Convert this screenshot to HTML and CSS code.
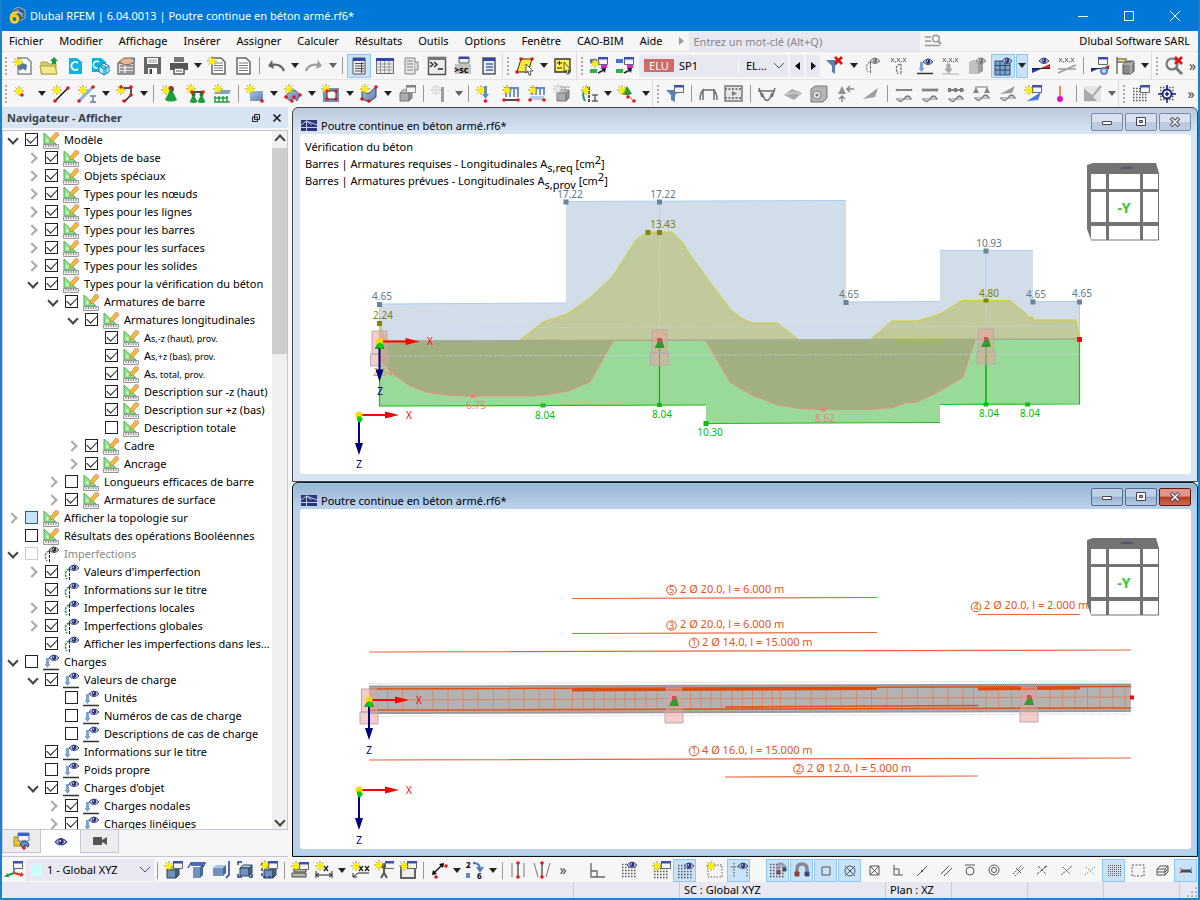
FILE: index.html
```html
<!DOCTYPE html>
<html lang="fr">
<head>
<meta charset="utf-8">
<title>Dlubal RFEM | 6.04.0013 | Poutre continue en béton armé.rf6*</title>
<link rel="stylesheet" href="styles.css">
</head>
<body>
<svg class="defs" aria-hidden="true">
  <defs>
    <linearGradient id="steel" x1="0" y1="0" x2="1" y2="1"><stop offset="0" stop-color="#a9c4e2"/><stop offset="1" stop-color="#5b80ab"/></linearGradient>
    <g id="star"><path d="M5 0v10M0 5h10M1.500 1.500l7 7M8.500 1.500l-7 7" stroke="#a89a10" stroke-width="1"/><path d="M5 1.500l1 1.500 1.700-.500-.500 1.700 1.500 1-1.500 1 .500 1.700-1.700-.500-1 1.500-1-1.500-1.700.500.500-1.700-1.500-1 1.500-1-.500-1.700 1.700.500z" fill="#ffee00"/></g>
    <g id="eye"><path d="M0 4q5-6 10 0q-5 5-10 0z" fill="#c4cbe8" stroke="#3c4472"/><circle cx="5" cy="3.600" r="2.300" fill="#26307c"/><circle cx="4.300" cy="3" r=".8" fill="#fff"/></g>
    <g id="win"><path d="M.5.5h9v7h-9z" fill="#f4f4f4" stroke="#666"/><path d="M0 0h10v2.500H0z" fill="#3c50b4"/></g>
    <circle id="dot" r="1.800" fill="#e8141c"/>
    <g id="cone"><path d="M4.500 2l4 8q-4 2-8 0z" fill="#1f9a3c"/><circle cx="4.500" cy="2.500" r="2" fill="#1b7f30"/></g>
    <g id="cube"><path d="M0 4l3-3h9l-3 3z" fill="#b7cde6" stroke="#345"/><path d="M0 4h9v8H0z" fill="#6f93bd" stroke="#345"/><path d="M9 4l3-3v8l-3 3z" fill="#46688f" stroke="#345"/></g>
    <g id="redx"><path d="M1 1l7 7M8 1L1 8" stroke="#e60f0f" stroke-width="2.600"/></g>
    <g id="xxx"><path d="M0 1l3 4M3 1L0 5M6 1l3 4M9 1L6 5M12 1l3 4M15 1l-3 4M4.500 4v1.500M10.500 4v1.500" stroke="#333"/></g>
    <g id="grid"><path d="M1 1.500h15M1 4.500h15M1 7.500h15M1 10.500h15M1 13.500h15" stroke="#555" stroke-width="1.500" stroke-dasharray="1.500 1.500"/></g>
    <g id="page"><path d="M1 1h9l4 4v12H1z" fill="#fff" stroke="#666" stroke-width="1.500"/><path d="M3 6h9M3 8.500h9M3 11h9M3 13.500h9" stroke="#777"/></g>
    <g id="beamres"><path d="M0 0h16" stroke="#444" stroke-width="1.800"/><circle cx="1" r="1.300" fill="#555"/><circle cx="15" r="1.300" fill="#555"/><path d="M0 9h16" stroke="#444"/><path d="M1 9q3.500 5 7 0q3.500-6 7 0" fill="#bbb" stroke="#444" stroke-width="1.300"/></g>
    <g id="i-edit"><path d="M1 1v11h12z" fill="#90e890" stroke="#55a955"/><path d="M3.500 7v2.500h3z" fill="#fff"/><path d="M13 0l3 3-6 6-3.500 1 1-3.500z" fill="#f6b93c" stroke="#a87920" stroke-width=".6"/><path d="M12.500.5l1.500-1 2.500 2.500-1 1.500z" fill="#e9a3a8"/><path d="M.5 12.500h15v4H.5z" fill="#eee" stroke="#999"/><path d="M3 13v2M5.500 13v2M8 13v2M10.500 13v2M13 13v2" stroke="#888"/></g>
    <g id="i-imp"><path d="M6 5Q0 8 4 15" fill="none" stroke="#2c9a54" stroke-width="1.700" stroke-dasharray="2.500 1"/><path d="M6.500 5v11" stroke="#222" stroke-dasharray="3 1"/><use href="#eye" x="6" y="0"/></g>
    <g id="i-load"><path d="M0 15.500h16" stroke="#333" stroke-width="1.500"/><path d="M3 4h3v6h1.500l-3 4-3-4H3z" fill="#7ba3cf"/><use href="#eye" x="6" y="0"/></g>
    <g id="axes">
      <path d="M0 0h26" stroke="#f00" stroke-width="2"/><path d="M26-3.500L40 0 26 3.500z" fill="#f00"/>
      <path d="M0 0v30" stroke="#00008b" stroke-width="2"/><path d="M-4 28L0 40 4 28z" fill="#00007b"/>
      <circle cx="0" cy="0" r="3.500" fill="#ffd800"/><path d="M-2 2l3-1 3 3-3 4-3-3z" fill="#00d400"/>
    </g>
    <g id="support"><path d="M-7.500-10H7.500V13H-7.500zM-9 13H9V25H-9z" fill="#ee9c9c" fill-opacity=".5" stroke="#b9a9ac"/><path d="M-2-2h4l3 10H-5L-2 2z" fill="#2f9c2f"/><path d="M-2-2h4v4h-4z" fill="#d05050"/></g>
    <g id="navcube">
      <path d="M0 2L6 0h63l3 10v67H4L0 66z" fill="#757272"/>
      <path d="M4 11h15v15H4zM22 11h31v15H22zM56 11h15v15H56zM4 29h15v30H4zM22 29h31v30H22zM56 29h15v30H56zM4 63h15v14H4zM22 63h31v14H22zM56 63h15v14H56z" fill="#fff"/>
      <path d="M4 77h67.500V11" fill="none" stroke="#757272"/>
      <path d="M32 5q8-3 16 0q-8 2-16 0z" fill="#53536a"/>
    </g>
    <g id="model"><path d="M0 0h16v11H0z" fill="#2c357c"/><path d="M0 7.500h16M5.500 1v10M5.500 1L0 5M5.500 1L16 5M5.500 1l5 4" stroke="#c5cdf0" fill="none"/></g>
  </defs>
</svg>

<div class="app">
<header class="titlebar">
  <svg width="18" height="18" viewBox="0 0 18 18"><path d="M5 3l5-3 7 3v8l-5 3" fill="#3d5f86" stroke="#9ab8d8"/><path d="M8 5l7 2M9 2l6 8" stroke="#b9cfe6"/><path d="M9.500 5.500Q3 5 3 11.500" fill="none" stroke="#ffce1c" stroke-width="3"/><circle cx="6.500" cy="12" r="3.400" fill="none" stroke="#ffce1c" stroke-width="2.800"/></svg>
  <h1>Dlubal RFEM | 6.04.0013 | Poutre continue en béton armé.rf6*</h1>
  <button aria-label="Réduire"><svg width="12" height="12"><path d="M1 6.500h10" stroke="#fff"/></svg></button>
  <button aria-label="Agrandir"><svg width="12" height="12"><path d="M1.500 1.500h9v9h-9z" stroke="#fff" fill="none"/></svg></button>
  <button aria-label="Fermer"><svg width="12" height="12"><path d="M1 1l10 10M11 1L1 11" stroke="#fff"/></svg></button>
</header>

<nav class="menubar">
  <button>Fichier</button><button>Modifier</button><button>Affichage</button><button>Insérer</button><button>Assigner</button><button>Calculer</button><button>Résultats</button><button>Outils</button><button>Options</button><button>Fenêtre</button><button>CAO-BIM</button><button>Aide</button>
  <span class="more"></span>
  <input type="text" class="search" aria-label="Rechercher" placeholder="Entrez un mot-clé (Alt+Q)">
  <svg width="17" height="14"><path d="M0 3h6M0 7h6M0 11.500h15" stroke="#999" stroke-width="1.500"/><circle cx="11" cy="4.500" r="3.300" fill="none" stroke="#999" stroke-width="1.500"/><path d="M13 7l3 3" stroke="#999" stroke-width="2"/></svg>
  <span class="company">Dlubal Software SARL</span>
</nav>

<div class="toolbar" role="toolbar" aria-label="Standard">
  <i class="grip"></i>
  <button class="tb" aria-label="Nouveau"><svg><path d="M5 2h9l4 4v12H5z" fill="#fff" stroke="#888" stroke-width="1.500"/><path d="M4 10q5-5 10-1l-1 6q-3-4-6 0z" fill="#4f78a8"/><use href="#star" x="0" y="1"/></svg></button>
  <button class="tb" aria-label="Ouvrir"><svg><path d="M2 6h6l2 2h7v10H2z" fill="#d8cd62" stroke="#ada23e"/><path d="M1 10h15l2 8H3z" fill="#f1e892" stroke="#ada23e"/><path d="M13 8V5h-2l4-4 4 4h-2v3z" fill="#169a3a"/></svg></button>
  <button class="tb" aria-label="Centre Dlubal"><svg><path d="M4 2h8l5 4v12H4z" fill="#08b4e0"/><path d="M13 7a4 4 0 1 0 0 6" fill="none" stroke="#fff" stroke-width="2"/></svg></button>
  <button class="tb" aria-label="Blocs"><svg><path d="M1 2h9l5 4v10H1z" fill="#08b4e0"/><path d="M8 10l5-3 5 3v6l-5 3-5-3zM8 10l5 3 5-3M13 13v6M10 8.500l5 3v6" fill="#bfe9f7" stroke="#0687b8"/><path d="M8 6a3.500 3.500 0 1 0-1 6" stroke="#fff" stroke-width="1.500" fill="none"/></svg></button>
  <button class="tb" aria-label="Propriétés"><svg><path d="M1 7h16v11H1z" fill="#ddd" stroke="#777" stroke-width="1.500"/><path d="M3 10h4M3 13h4M3 16h4M9 10h7M9 13h7M9 16h7" stroke="#555"/><path d="M2 6l5-4h8l3 3-4 3-6 1z" fill="#e8b897" stroke="#8b5a3c"/><path d="M14 1l4 1v4" fill="#4a7ab5"/></svg></button>
  <button class="tb" aria-label="Enregistrer"><svg><path d="M1 1h17v17H1z" fill="#666"/><path d="M4 2h11v6H4z" fill="#fff"/><path d="M5 4h9M5 6h9" stroke="#999"/><path d="M5 12h9v6H5z" fill="#fff"/><path d="M6.500 13h2.500v5H6.500z" fill="#444"/></svg></button>
  <button class="tb" aria-label="Imprimer"><svg><path d="M5 1h10v5H5z" fill="#777"/><path d="M1 7h18v7H1z" fill="#555"/><path d="M5 12h10v6H5z" fill="#fff" stroke="#555" stroke-width="1.500"/><path d="M7 15h6" stroke="#555"/></svg></button><button class="dd" aria-label="Options d'impression"></button>
  <button class="tb" aria-label="Nouveau rapport"><svg><use href="#page" x="4" y="1"/><use href="#star" x="0" y="0"/></svg></button>
  <button class="tb" aria-label="Rapport"><svg><use href="#page" x="3" y="1"/></svg></button>
  <i class="sep"></i>
  <button class="tb" aria-label="Annuler"><svg><path d="M18 15Q15 7 5 9" fill="none" stroke="#666" stroke-width="2.200"/><path d="M2 10l4-6 2 9z" fill="#666"/></svg></button><button class="dd" aria-label="Liste d'annulation"></button>
  <button class="tb off" aria-label="Rétablir"><svg><path d="M2 15Q5 7 15 9" fill="none" stroke="#777" stroke-width="2.200"/><path d="M18 10l-4-6-2 9z" fill="#777"/></svg></button><button class="dd off" aria-label="Liste de rétablissement"></button>
  <i class="sep"></i>
  <button class="tb on" aria-label="Navigateur"><svg><path d="M4 2h12v16H4z" fill="#eee" stroke="#555"/><path d="M4 2h12v3H4z" fill="#3346b0"/><path d="M6 7.500h9M6 10h9M6 12.500h9M6 15h9" stroke="#555"/><path d="M12.500 6v11" stroke="#555"/></svg></button>
  <button class="tb" aria-label="Tableaux"><svg><path d="M1.500 2.500h17v15h-17z" fill="#eee" stroke="#666"/><path d="M1 2h18v3H1z" fill="#3346b0"/><path d="M1 8h18M1 11h18M1 14h18M5.500 5v12M9.500 5v12M14 5v12" stroke="#999"/></svg></button>
  <button class="tb off" aria-label="Panneau"><svg><path d="M4 2h10v16H4z" fill="#ddd" stroke="#555"/><path d="M14 6h3v8h-3M6 5h6M6 8h6M6 11h6M6 14h6" stroke="#555" fill="#ccc"/></svg></button>
  <button class="tb" aria-label="Console"><svg><path d="M1.500 1.500h17v17h-17z" fill="#eee" stroke="#555" stroke-width="1.500"/><path d="M1 1h18v3H1z" fill="#777"/><path d="M3 6l3 2.500L3 11M7 6l3 2.500L7 11M11 13h5" stroke="#222" stroke-width="1.300" fill="none"/></svg></button>
  <button class="tb" aria-label="Script"><svg><path d="M6 1h10v6H6z" fill="#f1f1f1" stroke="#555"/><path d="M6 1h10v2H6z" fill="#3346b0"/><path d="M2 8h16v10H2z" fill="#c2c2c2"/><text x="1" y="17" font-size="9" font-weight="700">&gt;sc</text></svg></button>
  <button class="tb" aria-label="Liste"><svg><path d="M4 2h12v16H4z" fill="#e8edf6" stroke="#555" stroke-width="1.500"/><path d="M4 2h12v3H4z" fill="#3346b0"/><path d="M7 8h7M7 11h7M7 14h7" stroke="#4a68a8" stroke-width="1.500"/></svg></button>
  <i class="edge"></i><i class="grip"></i>
  <button class="tb" aria-label="Sélection par polygone"><svg><path d="M6 3h11l-4 13H2z" fill="#ffe838" stroke="#333"/><use href="#dot" x="6" y="3"/><use href="#dot" x="17" y="3"/><use href="#dot" x="2" y="16"/><path d="M11 8l7 7-3 0 1 4-2 0-1-4-2 2z" fill="#fff" stroke="#333" stroke-width=".8"/></svg></button><button class="dd" aria-label="Modes de sélection"></button>
  <button class="tb" aria-label="Ajouter à la sélection"><svg><path d="M2 3h15v13H2z" fill="#ffee58" stroke="#333" stroke-width="1.300"/><path d="M4 7h5M6.500 5v4M4 12h5" stroke="#222"/><path d="M11 6l7 8-3 0 1 4-2 0-1-4-2 2z" fill="#ffee58" stroke="#333" stroke-width=".8"/></svg></button>
  <i class="edge"></i><i class="grip"></i>
  <button class="tb" aria-label="Nouveau cas"><svg><path d="M1 3h7v4H1z" fill="#4470d8"/><path d="M1 13h7v4H1z" fill="#30b040"/><path d="M12 8h6v4h-6z" fill="#e020d8"/><use href="#win" x="9" y="1"/><path d="M9 17l6-3" stroke="#222" stroke-width="1.500"/><path d="M12 12l5 0-1 5z" fill="#222"/><use href="#star" x="1" y="2"/></svg></button>
  <button class="tb" aria-label="Cas de charge"><svg><path d="M1 3h7v4H1z" fill="#4470d8"/><path d="M1 13h7v4H1z" fill="#30b040"/><path d="M12 8h6v4h-6z" fill="#e020d8"/><use href="#win" x="9" y="1"/><path d="M9 17l6-3" stroke="#222" stroke-width="1.500"/><path d="M12 12l5 0-1 5z" fill="#222"/></svg></button>
  <div class="combo"><b class="elu">ELU</b><span class="sp">SP1</span><span class="case">EL...</span><svg class="chev"><path d="M1 1l5 5 5-5" fill="none" stroke="#555"/></svg></div>
  <button class="step" aria-label="Précédent"><svg><path d="M5 0v8L0 4z"/></svg></button>
  <button class="step" aria-label="Suivant"><svg><path d="M0 0v8l5-4z"/></svg></button>
  <button class="tb" aria-label="Effacer le filtre"><svg><path d="M1 4h14l-5 6v8l-3-2v-6z" fill="#5682b8"/><use href="#redx" x="9" y="0"/></svg></button><button class="dd" aria-label="Filtres"></button>
  <button class="tb off" aria-label="Imperfections"><svg><use href="#i-imp" x="1" y="1"/></svg></button>
  <button class="tb off" aria-label="Valeurs d'imperfection"><svg><use href="#xxx" x="2" y="1"/><path d="M11 8Q5 10 9 18M12 8v11" stroke="#333" stroke-width="1.300" fill="none" stroke-dasharray="2.500 1"/></svg></button>
  <button class="tb" aria-label="Charges"><svg><use href="#i-load" x="2" y="2"/></svg></button>
  <button class="tb off" aria-label="Valeurs de charge"><svg><use href="#xxx" x="2" y="1"/><path d="M6 8h3v5h2l-3.500 4L4 13h2zM1 18h17" fill="#888" stroke="#888"/></svg></button>
  <button class="tb off" aria-label="Rendu"><svg><path d="M2 6l4-2h8l-3 2v12H2z" fill="#aaa"/><path d="M11 6l5-2v11l-5 3z" fill="#777"/><use href="#eye" x="9" y="1"/></svg></button>
  <button class="tb on" aria-label="Résultats"><svg><path d="M2 5h15v14H2z" fill="#7fa5cf"/><path d="M2 5h15v14H2zM2 9.500h15M2 14h15M7 5v14M12 5v14" fill="none" stroke="#2d4b70"/><use href="#eye" x="9" y="1"/></svg></button><button class="dd on" aria-label="Options de résultats"></button>
  <button class="tb" aria-label="Diagrammes"><svg><path d="M1 13h9l-9 4z" fill="#1838b0"/><path d="M10 12l9-4v4z" fill="#d82020"/><path d="M1 12.500h18" stroke="#222"/><use href="#eye" x="8" y="1"/></svg></button>
  <button class="tb off" aria-label="Valeurs"><svg><use href="#xxx" x="2" y="1"/><path d="M1 13h18M1 17l9-4 9-4" stroke="#777" stroke-width="1.500"/></svg></button>
  <i class="sep"></i>
  <button class="tb" aria-label="Paramètres"><svg><use href="#win" x="8" y="1"/><path d="M1 12h9l-9 4z" fill="#1838b0"/><path d="M10 13l9-4v4z" fill="#d82020"/><path d="M1 12.500h18" stroke="#222"/><circle cx="14" cy="15" r="3" fill="#cfdcf5" stroke="#5b80d0" stroke-width="2"/></svg></button>
  <button class="tb" aria-label="Plan de coupe"><svg><path d="M1 1v17M1 3h10M1 6h10" stroke="#333"/><circle cx="4" cy="3" r="1.500" fill="#c8a820"/><circle cx="9" cy="5" r="1.500" fill="#c8a820"/><path d="M7 8l4-3h7v10l-3 3H7z" fill="#888" stroke="#555"/><path d="M7 8h8v10M15 8l3-3" fill="none" stroke="#ccc"/></svg></button><button class="dd" aria-label="Options de coupe"></button>
  <i class="edge"></i><i class="grip"></i>
  <button class="tb" aria-label="Zoom"><svg><circle cx="8" cy="8" r="5.500" fill="none" stroke="#777" stroke-width="2.200"/><path d="M12 12l6 6" stroke="#777" stroke-width="3"/><use href="#redx" x="10" y="0"/></svg></button>
  <button class="ext" aria-label="Plus">»</button>
</div>

<div class="toolbar" role="toolbar" aria-label="Objets">
  <i class="grip"></i>
  <button class="tb" aria-label="Nœud"><svg><use href="#star" x="1" y="2"/><use href="#dot" x="9" y="11"/></svg></button><button class="dd" aria-label="Nœuds"></button>
  <button class="tb" aria-label="Ligne"><svg><path d="M4 17L17 4" stroke="#111" stroke-width="1.500"/><use href="#star" x="1" y="1"/><use href="#dot" x="4" y="17"/><use href="#dot" x="17" y="4"/></svg></button>
  <button class="tb" aria-label="Barre"><svg><path d="M2 17L16 3" stroke="#8fb4dc" stroke-width="3"/><path d="M13 12h6M13 18h6M16 12v6" stroke="#68809c" stroke-width="1.500"/><use href="#star" x="1" y="1"/><use href="#dot" x="16" y="3"/><use href="#dot" x="2" y="17"/></svg></button><button class="dd" aria-label="Barres"></button>
  <button class="tb" aria-label="Polyligne"><svg><path d="M5 4h11v7l-7 7" stroke="#222" stroke-width="1.500" fill="none"/><use href="#star" x="1" y="1"/><use href="#dot" x="6" y="3"/><use href="#dot" x="16" y="3"/><use href="#dot" x="16" y="11"/><use href="#dot" x="9" y="17"/></svg></button><button class="dd" aria-label="Polylignes"></button>
  <i class="sep"></i>
  <button class="tb" aria-label="Appui nodal"><svg><path d="M11 4l6 12q-6 3-12 0z" fill="#1f9a3c"/><circle cx="11" cy="5" r="3" fill="#1b7f30"/><use href="#star" x="1" y="1"/><use href="#dot" x="11" y="4"/></svg></button>
  <button class="tb" aria-label="Appui linéique"><svg><use href="#cone" x="3" y="8"/><use href="#cone" x="11" y="8"/><path d="M5 8h12" stroke="#111" stroke-width="1.500"/><use href="#star" x="0" y="0"/><use href="#dot" x="6" y="8"/><use href="#dot" x="17" y="8"/></svg></button>
  <button class="tb" aria-label="Appui surfacique"><svg><path d="M2 10h15l2-4H6z" fill="#79a5c9"/><path d="M3 12v6M7 12v6M11 12v6M15 12v6M3 14h13M2 18h16" stroke="#28a048" stroke-width="1.500"/><use href="#star" x="1" y="0"/></svg></button>
  <i class="sep"></i>
  <button class="tb" aria-label="Surface"><svg><path d="M5 7h13v10H5z" fill="url(#steel)"/><use href="#star" x="0" y="0"/><use href="#dot" x="17" y="17"/></svg></button><button class="dd" aria-label="Surfaces"></button>
  <button class="tb" aria-label="Coque"><svg><path d="M2 13q8-13 15-2l-3 6q-4-5-7 0z" fill="url(#steel)" stroke="#46688f"/><use href="#star" x="1" y="0"/><use href="#dot" x="3" y="13"/><use href="#dot" x="11" y="13"/><use href="#dot" x="17" y="11"/><use href="#dot" x="9" y="17"/></svg></button><button class="dd" aria-label="Coques"></button>
  <button class="tb" aria-label="Ouverture"><svg><path d="M2 4h16v14H2z" fill="#6d93c0"/><path d="M6 7h9v8H6z" fill="#fff" stroke="#333"/><use href="#star" x="0" y="0"/><use href="#dot" x="6" y="7"/><use href="#dot" x="15" y="7"/><use href="#dot" x="15" y="15"/><use href="#dot" x="6" y="15"/></svg></button><button class="dd" aria-label="Ouvertures"></button>
  <button class="tb" aria-label="Solide"><svg><path d="M3 7l6 3 8-7v10l-7 5-7-3z" fill="url(#steel)" stroke="#345"/><use href="#star" x="1" y="0"/><use href="#dot" x="17" y="3"/><use href="#dot" x="3" y="15"/><use href="#dot" x="10" y="17"/></svg></button><button class="dd" aria-label="Solides"></button>
  <button class="tb off" aria-label="Bloc"><svg><use href="#cube" x="3" y="5"/><use href="#win" x="9" y="1"/></svg></button>
  <i class="sep"></i>
  <button class="tb off" aria-label="Charge"><svg><path d="M11 3h3v15h-3z" fill="#777"/><use href="#star" x="1" y="1"/></svg></button><button class="dd off" aria-label="Options de charge"></button>
  <i class="sep"></i>
  <button class="tb" aria-label="Charge nodale"><svg><path d="M9 2h3v8h2l-3.500 5L7 10h2z" fill="#5e8cc4"/><use href="#star" x="1" y="1"/><use href="#dot" x="10.500" y="17"/></svg></button>
  <button class="tb" aria-label="Charge de barre"><svg><path d="M4 4h14M5 4v9M9 4v9M13 4v9M17 4v9" stroke="#5e8cc4" stroke-width="1.800"/><path d="M2 16h16" stroke="#111" stroke-width="1.500"/><use href="#star" x="1" y="1"/><use href="#dot" x="3" y="16"/><use href="#dot" x="17" y="16"/></svg></button>
  <button class="tb" aria-label="Charge surfacique"><svg><path d="M4 4h14M5 4v7M9 4v7M13 4v7M17 4v7" stroke="#5e8cc4" stroke-width="1.800"/><path d="M3 12h14v4H3z" fill="#b6cde8"/><use href="#star" x="1" y="1"/><use href="#dot" x="3" y="16"/><use href="#dot" x="17" y="16"/></svg></button>
  <button class="tb off" aria-label="Charge solide"><svg><use href="#cube" x="4" y="5"/><path d="M3 3h14M4 3v8M8 3v8M12 3v8" stroke="#777"/><use href="#star" x="0" y="0"/></svg></button>
  <button class="tb" aria-label="Imperfection"><svg><path d="M9 3Q1 8 6 17" fill="none" stroke="#2c9a54" stroke-width="2"/><path d="M10 3v15" stroke="#222" stroke-dasharray="3 1" stroke-width="1.500"/><path d="M13 11h6M13 17h6M16 11v6" stroke="#222"/><use href="#star" x="2" y="1"/></svg></button><button class="dd" aria-label="Imperfections de barre"></button>
  <button class="tb" aria-label="Déplacement imposé"><svg><path d="M10 2l5 8q-6 2-10 0z" fill="#1f9a3c"/><path d="M9 10l8 7" stroke="#c01818" stroke-dasharray="2 1"/><use href="#star" x="0" y="1"/><use href="#dot" x="17" y="17"/><use href="#dot" x="11" y="13"/></svg></button><button class="dd" aria-label="Déplacements"></button>
  <i class="edge"></i><i class="grip"></i>
  <button class="tb" aria-label="Filtre"><svg><path d="M1 6h14l-5 5v7l-4-2v-5z" fill="#5682b8"/><use href="#win" x="9" y="1"/></svg></button>
  <i class="sep"></i>
  <button class="tb off" aria-label="Déformation"><svg><path d="M5 16V6h11v10M2 16Q2 8 6 5M19 16q0-8-4-11" fill="none" stroke="#333" stroke-width="1.500"/></svg></button>
  <button class="tb off" aria-label="Animation"><svg><path d="M1 2h17v15H1z" fill="#ddd" stroke="#444" stroke-width="1.500"/><path d="M1 5h17M1 14h17" stroke="#444" stroke-width="2" stroke-dasharray="2 1.500"/><path d="M8 7l5 2.500L8 12z" fill="#444"/></svg></button>
  <i class="sep"></i>
  <button class="tb off" aria-label="Efforts"><svg><path d="M1 7h17M2 4l3 9M18 4l-3 9M5 9q5 15 10 0" fill="none" stroke="#333" stroke-width="1.500"/></svg></button>
  <button class="tb off" aria-label="Surfaces résultats"><svg><path d="M1 11l8-6 10 4-8 7z" fill="#888"/><path d="M3 11q7-4 14-1" stroke="#ddd" fill="none"/></svg></button>
  <button class="tb off" aria-label="Solides résultats"><svg><path d="M2 5l4-3h12v12l-4 4H2z" fill="#999" stroke="#444"/><circle cx="8" cy="11" r="4" fill="#ddd" stroke="#555"/><circle cx="8" cy="11" r="1.500" fill="#444"/></svg></button>
  <button class="tb off" aria-label="Réactions"><svg><path d="M7 2l4 8H3z" fill="#666"/><path d="M7 18v-5M4 15l3-3 3 3M19 5h-6M15 2l-3 3 3 3" stroke="#555" fill="none" stroke-width="1.500"/></svg></button>
  <button class="tb off" aria-label="Section"><svg><path d="M2 15L17 4l-3 9z" fill="#777"/></svg></button>
  <i class="sep"></i>
  <button class="tb off" aria-label="Résultats de barre"><svg><use href="#beamres" x="2" y="6"/></svg></button>
  <button class="tb off" aria-label="Résultats de surface"><svg><path d="M2 4h16v4H2z" fill="#bbb"/><use href="#beamres" x="2" y="6"/></svg></button>
  <button class="tb off" aria-label="Résultats de ligne"><svg><path d="M2 6h16" stroke="#444" stroke-width="4" stroke-dasharray="3 3"/><use href="#beamres" x="2" y="6"/></svg></button>
  <button class="tb off" aria-label="Appuis"><svg><path d="M4 3l3 6H1zM15 3l3 6h-6z" fill="#555"/><path d="M3 3h13" stroke="#444"/><path d="M2 14h16" stroke="#444"/><path d="M3 14q3.500 5 7 0q3.500-6 7 0" fill="#bbb" stroke="#444" stroke-width="1.300"/></svg></button>
  <button class="tb off" aria-label="Coupe"><svg><path d="M2 10L17 2l-3 7z" fill="#777"/><path d="M2 14h16" stroke="#444"/><path d="M3 14q3.500 5 7 0q3.500-6 7 0" fill="#bbb" stroke="#444" stroke-width="1.300"/></svg></button>
  <button class="tb" aria-label="Nouvelle coupe"><svg><path d="M3 17l14-9-3 8z" fill="#4a78e0"/><use href="#win" x="8" y="1"/><use href="#star" x="0" y="1"/></svg></button>
  <button class="tb" aria-label="Point de résultat"><svg><path d="M10 2v12" stroke="#f06020" stroke-width="1.500"/><circle cx="10" cy="15" r="3" fill="#e010c8"/></svg></button>
  <i class="sep"></i>
  <button class="tb off" aria-label="Vérification"><svg><path d="M1 2h17v16H1z" fill="#ddd"/><path d="M1 4l13 13H1z" fill="#888"/><path d="M6 9l3 4 9-11" fill="none" stroke="#888" stroke-width="2"/></svg></button><button class="dd off" aria-label="Vérifications"></button>
  <i class="edge"></i><i class="grip"></i>
  <button class="tb" aria-label="Grille"><svg><use href="#grid" x="1" y="3"/><use href="#win" x="9" y="1"/></svg></button>
  <button class="tb" aria-label="Accrochage"><svg><use href="#grid" x="2" y="2"/><circle cx="10" cy="10" r="4.500" fill="#eef" stroke="#141c80" stroke-width="1.800"/><path d="M10 1v5M10 14v5M1 10h5M14 10h5M10 8v4M8 10h4" stroke="#141c80" stroke-width="1.500"/></svg></button>
  <button class="ext" aria-label="Plus">»</button>
</div>

<main class="work">
<aside class="navigator">
  <header><h2>Navigateur - Afficher</h2>
    <button aria-label="Détacher"><svg width="10" height="10"><path d="M3.500 1.500h5v5h-5z M1.500 4h5v4.500h-5z" fill="#d8e4f2" stroke="#222"/></svg></button>
    <button aria-label="Fermer le navigateur"><svg width="10" height="10"><path d="M1.500 1.500l7 7M8.500 1.500l-7 7" stroke="#222" stroke-width="1.700"/></svg></button>
  </header>
  <div class="treebox">
  <ul class="tree">
    <li class="l0"><i class="open"></i><label><input type="checkbox" checked><svg><use href="#i-edit"/></svg>Modèle</label></li>
    <li class="l1"><i class="shut"></i><label><input type="checkbox" checked><svg><use href="#i-edit"/></svg>Objets de base</label></li>
    <li class="l1"><i class="shut"></i><label><input type="checkbox" checked><svg><use href="#i-edit"/></svg>Objets spéciaux</label></li>
    <li class="l1"><i class="shut"></i><label><input type="checkbox" checked><svg><use href="#i-edit"/></svg>Types pour les nœuds</label></li>
    <li class="l1"><i class="shut"></i><label><input type="checkbox" checked><svg><use href="#i-edit"/></svg>Types pour les lignes</label></li>
    <li class="l1"><i class="shut"></i><label><input type="checkbox" checked><svg><use href="#i-edit"/></svg>Types pour les barres</label></li>
    <li class="l1"><i class="shut"></i><label><input type="checkbox" checked><svg><use href="#i-edit"/></svg>Types pour les surfaces</label></li>
    <li class="l1"><i class="shut"></i><label><input type="checkbox" checked><svg><use href="#i-edit"/></svg>Types pour les solides</label></li>
    <li class="l1"><i class="open"></i><label><input type="checkbox" checked><svg><use href="#i-edit"/></svg>Types pour la vérification du béton</label></li>
    <li class="l2"><i class="open"></i><label><input type="checkbox" checked><svg><use href="#i-edit"/></svg>Armatures de barre</label></li>
    <li class="l3"><i class="open"></i><label><input type="checkbox" checked><svg><use href="#i-edit"/></svg>Armatures longitudinales</label></li>
    <li class="l4"><i></i><label><input type="checkbox" checked><svg><use href="#i-edit"/></svg><span>A<small>s,-z (haut), prov.</small></span></label></li>
    <li class="l4"><i></i><label><input type="checkbox" checked><svg><use href="#i-edit"/></svg><span>A<small>s,+z (bas), prov.</small></span></label></li>
    <li class="l4"><i></i><label><input type="checkbox" checked><svg><use href="#i-edit"/></svg><span>A<small>s, total, prov.</small></span></label></li>
    <li class="l4"><i></i><label><input type="checkbox" checked><svg><use href="#i-edit"/></svg>Description sur -z (haut)</label></li>
    <li class="l4"><i></i><label><input type="checkbox" checked><svg><use href="#i-edit"/></svg>Description sur +z (bas)</label></li>
    <li class="l4"><i></i><label><input type="checkbox"><svg><use href="#i-edit"/></svg>Description totale</label></li>
    <li class="l3"><i class="shut"></i><label><input type="checkbox" checked><svg><use href="#i-edit"/></svg>Cadre</label></li>
    <li class="l3"><i class="shut"></i><label><input type="checkbox" checked><svg><use href="#i-edit"/></svg>Ancrage</label></li>
    <li class="l2"><i class="shut"></i><label><input type="checkbox"><svg><use href="#i-edit"/></svg>Longueurs efficaces de barre</label></li>
    <li class="l2"><i class="shut"></i><label><input type="checkbox" checked><svg><use href="#i-edit"/></svg>Armatures de surface</label></li>
    <li class="l0"><i class="shut"></i><label><input type="checkbox" class="hot"><svg><use href="#i-edit"/></svg>Afficher la topologie sur</label></li>
    <li class="l0"><i></i><label><input type="checkbox"><svg><use href="#i-edit"/></svg>Résultats des opérations Booléennes</label></li>
    <li class="l0 dim"><i class="open"></i><label><input type="checkbox" disabled><svg><use href="#i-imp"/></svg>Imperfections</label></li>
    <li class="l1"><i class="shut"></i><label><input type="checkbox" checked><svg><use href="#i-imp"/></svg>Valeurs d'imperfection</label></li>
    <li class="l1"><i></i><label><input type="checkbox" checked><svg><use href="#i-imp"/></svg>Informations sur le titre</label></li>
    <li class="l1"><i class="shut"></i><label><input type="checkbox" checked><svg><use href="#i-imp"/></svg>Imperfections locales</label></li>
    <li class="l1"><i class="shut"></i><label><input type="checkbox" checked><svg><use href="#i-imp"/></svg>Imperfections globales</label></li>
    <li class="l1"><i></i><label><input type="checkbox" checked><svg><use href="#i-imp"/></svg>Afficher les imperfections dans les...</label></li>
    <li class="l0"><i class="open"></i><label><input type="checkbox"><svg><use href="#i-load"/></svg>Charges</label></li>
    <li class="l1"><i class="open"></i><label><input type="checkbox" checked><svg><use href="#i-load"/></svg>Valeurs de charge</label></li>
    <li class="l2"><i></i><label><input type="checkbox"><svg><use href="#i-load"/></svg>Unités</label></li>
    <li class="l2"><i></i><label><input type="checkbox"><svg><use href="#i-load"/></svg>Numéros de cas de charge</label></li>
    <li class="l2"><i></i><label><input type="checkbox"><svg><use href="#i-load"/></svg>Descriptions de cas de charge</label></li>
    <li class="l1"><i></i><label><input type="checkbox" checked><svg><use href="#i-load"/></svg>Informations sur le titre</label></li>
    <li class="l1"><i></i><label><input type="checkbox"><svg><use href="#i-load"/></svg>Poids propre</label></li>
    <li class="l1"><i class="open"></i><label><input type="checkbox" checked><svg><use href="#i-load"/></svg>Charges d'objet</label></li>
    <li class="l2"><i class="shut"></i><label><input type="checkbox" checked><svg><use href="#i-load"/></svg>Charges nodales</label></li>
    <li class="l2"><i class="shut"></i><label><input type="checkbox" checked><svg><use href="#i-load"/></svg>Charges linéiques</label></li>
  </ul>
  <div class="scroll"><i class="up"></i><b></b><i class="down"></i></div>
  </div>
  <div class="tabs">
    <button aria-label="Données"><svg width="18" height="18"><path d="M1 5h5l1 1h6v8H1z" fill="#f1c234" stroke="#a8821a"/><path d="M5 1h11v8H5z" fill="#f4f4f4" stroke="#5877d0"/><path d="M5 1h11v3H5z" fill="#3c60d0"/><path d="M7 12q4-6 9 0l-1 3-3-2-2 3z" fill="#5f93cc" stroke="#335"/><use href="#dot" x="11" y="16"/></svg></button>
    <button class="sel" aria-label="Afficher"><svg width="14" height="12" viewBox="-1 -1 12 10"><use href="#eye"/></svg></button>
    <button aria-label="Vues"><svg width="16" height="12"><path d="M1 2h9v8H1zM10 5l5-3v8l-5-3z" fill="#555"/></svg></button>
  </div>
</aside>

<div class="mdi">
<section class="child">
  <header><svg width="16" height="11"><use href="#model"/></svg><h2>Poutre continue en béton armé.rf6*</h2>
    <button aria-label="Réduire"><svg width="12" height="12"><path d="M1.500 5.500h9v3h-9z" fill="#fff" stroke="#445"/></svg></button><button aria-label="Agrandir"><svg width="12" height="12"><path d="M1.500 1.500h9v8h-9z" fill="#fff" stroke="#445"/><path d="M4.500 4.500h3v2h-3z" fill="#9ab" stroke="#445"/></svg></button><button aria-label="Fermer"><svg width="12" height="12"><path d="M2 2l8 8M10 2l-8 8" stroke="#445" stroke-width="3.600"/><path d="M2.500 2.500l7 7M9.500 2.500l-7 7" stroke="#fff" stroke-width="1.600"/></svg></button>
  </header>
  <svg class="view" viewBox="300 134 891 340" preserveAspectRatio="xMinYMin meet">
    <path d="M379.500 341V304L566 303V201.500L846 200.500V302L940 301.500V250.500H1033V301.500H1079.500V339z" fill="#d1dde9"/>
    <path d="M379.500 341V304L566 303M566 201.500L846 200.500M846 302L940 301.500M940 250.500H1033M1033 301.500H1079.500V339M659.500 202V340M986 251V339" fill="none" stroke="#abcdf0"/>
    <path d="M379.500 341V406L706 405V423.500L940 422.500V404.500L1079.500 404V339z" fill="#99da99"/>
    <path d="M379.500 341V406L706 405M706 423.500L940 422.500M940 404.500L1079.500 404V339M659.500 341V405M986 340V404" fill="none" stroke="#18c018" stroke-width="1.200"/>
    <g fill="#c1ca9c" stroke="#d0d028"><path d="M379.500 324L386 341H379.500z"/><path d="M520 340L543 322 567 314 590 298 613 276 636 240 648 232H672L683 243 690 255 730 309 741 318 752 323H777L799 340z"/><path d="M871 339L892 321H917L940 314 962 300.500H1010L1024 312 1028 317H1033V320H1076L1079.500 339z"/></g>
    <path d="M379.500 341V360L392 373 410 386 426 392 450 395.500 475 396H530L545 395 568 391 590 382 613 341zM706 341L730 382 752 395 778 405 800 408.500 823 409.500H870L893 407.500 905 403 917 402 940 391 963 377 975 340z" fill="#a0b07e"/>
    <path d="M388 369L392 373 410 386 426 392 450 395.500 475 396H530L545 395 568 391 590 382 613 341M706 341L730 382 752 395 778 405 800 408.500 823 409.500H870L893 407.500 905 403 917 402 940 391 963 377 975 340" fill="none" stroke="#f08a82"/>
    <path d="M379 341L1080 339" stroke="#a4a9a0" stroke-width="1.500"/>
    <path d="M659.500 202V340M986 251V339M385 328L1080 326M385 356L1080 354" stroke="#cdd3f4" stroke-dasharray="1 1.500"/>
    <path d="M659.500 341V405M986 340V404" stroke="#18a018"/>
    <use href="#support" x="379.500" y="341"/><use href="#support" x="659.500" y="340"/><use href="#support" x="986" y="339"/>
    <g fill="#6b8496"><path d="M377 302h5v5h-5zM563.500 199.500h5v5h-5zM657 199.500h5v5h-5zM843.500 300h5v5h-5zM983.500 248.500h5v5h-5zM1030.500 299.500h5v5h-5zM1077 299.500h5v5h-5z"/></g>
    <g fill="#85850c"><path d="M377 321h5v5h-5zM645.500 230h5v5h-5zM657 230h5v5h-5zM983.500 298.500h5v4h-5z"/></g>
    <g fill="#0ac00a"><path d="M540.500 403.500h5v4h-5zM657 403h5v4h-5zM703.500 421h5v5h-5zM983.500 402.500h5v4h-5zM1025 402.500h5v4h-5z"/></g>
    <path d="M470.500 394h5v4h-5zM820.500 407.500h5v4h-5z" fill="#f08080"/><path d="M1077 337h5v5h-5z" fill="#e81010"/>
    <g class="val steel"><text x="570" y="198">17.22</text><text x="663" y="198">17.22</text><text x="382" y="300">4.65</text><text x="849" y="298">4.65</text><text x="989" y="247">10.93</text><text x="1036" y="298">4.65</text><text x="1082" y="297">4.65</text></g>
    <g class="val olive"><text x="383" y="319">2.24</text><text x="663" y="228">13.43</text><text x="989" y="297">4.80</text></g>
    <g class="val green"><text x="545" y="419">8.04</text><text x="662" y="418">8.04</text><text x="710" y="436">10.30</text><text x="989" y="417">8.04</text><text x="1030" y="417">8.04</text></g>
    <g class="val rose"><text x="383" y="376">2.64</text><text x="476" y="409">6.75</text><text x="825" y="422">8.62</text></g>
    <use href="#axes" x="379.500" y="341.500"/><use href="#axes" x="359" y="415"/>
    <g class="val red"><text x="430" y="345">X</text><text x="409" y="419">X</text></g>
    <g class="val navy"><text x="380" y="395">Z</text><text x="359" y="468">Z</text></g>
    <g class="caption"><text x="305" y="151">Vérification du béton</text><text x="305" y="168">Barres | Armatures requises - Longitudinales A<tspan dy="4">s,req</tspan><tspan dy="-4"> [cm</tspan><tspan dy="-4">2</tspan><tspan dy="4">]</tspan></text><text x="305" y="185">Barres | Armatures prévues - Longitudinales A<tspan dy="4">s,prov</tspan><tspan dy="-4"> [cm</tspan><tspan dy="-4">2</tspan><tspan dy="4">]</tspan></text></g>
    <use href="#navcube" x="1087" y="163"/><text class="face" x="1124" y="213">-Y</text>
  </svg>
</section>

<section class="child active">
  <header><svg width="16" height="11"><use href="#model"/></svg><h2>Poutre continue en béton armé.rf6*</h2>
    <button aria-label="Réduire"><svg width="12" height="12"><path d="M1.500 5.500h9v3h-9z" fill="#fff" stroke="#445"/></svg></button><button aria-label="Agrandir"><svg width="12" height="12"><path d="M1.500 1.500h9v8h-9z" fill="#fff" stroke="#445"/><path d="M4.500 4.500h3v2h-3z" fill="#9ab" stroke="#445"/></svg></button><button class="close" aria-label="Fermer"><svg width="12" height="12"><path d="M2 2l8 8M10 2l-8 8" stroke="#445" stroke-width="3.600"/><path d="M2.500 2.500l7 7M9.500 2.500l-7 7" stroke="#fff" stroke-width="1.600"/></svg></button>
  </header>
  <svg class="view" viewBox="300 509 891 340" preserveAspectRatio="xMinYMin meet">
    <path d="M369 686.500L1131 684.500V711L369 713.500z" fill="#b3b3b3"/>
    <path d="M369 686.500L1131 684.500M369 713L1131 711" stroke="#9a9a9a" stroke-width="2"/>
    <path d="M369 683.500L1131 681V714L369 716.500z" fill="none" stroke="#cfcff2" stroke-dasharray="1 1"/>
    <g stroke="#e8794c" fill="none">
      <path d="M387.500 689v21M402.500 689v21M417.500 689v21M433 689v21M448 689v21M463 689v21M478 689v21M493.500 689v21M509 689v21M524 689v21M539 689v21M554.500 689v21M572.500 689v21M583 689v21M594 689v21M604 689v21M615 689v21M625 689v21M635 689v21M646 689v21M657 689v21M690.500 688v21M701 688v21M711 688v21M721 688v21M732 688v21M742.500 688v21M752.500 688v21M762.500 688v21M772.500 688v21M780.500 688v21M795.500 688v21M811 688v21M826 688v21M841 688v21M856.500 688v21M871.500 688v21M887 688v21M902 688v21M917.500 688v21M933 688v21M948 688v21M963 688v21M973.500 688v21M986 688v21M998.500 688v21M1011.500 688v21M1050 687v21M1062.500 687v21M1075 687v21M1087.500 687v21M1100 687v21M1113 687v21M1125 687v21" opacity=".7"/>
      <path d="M369 700L1131 697" stroke-width=".8"/>
      <path d="M369 689L1131 686.500M369 710L1131 708M725 707L978 705.500" stroke="#e4500f" stroke-width="1.500"/>
      <path d="M572 690L877 688.500M978 689L1080 688" stroke="#da4c10" stroke-width="3"/>
    </g>
    <g stroke="#e4663a" stroke-width="1.200"><path d="M572 598.500L877 597.500M572 633.500L877 632.500M369 652L1131 650M978 614.500H1080M369 760L1131 758M725 777L978 776"/></g>
    <use href="#support" x="369" y="699"/><use href="#support" x="674" y="698"/><use href="#support" x="1029" y="697"/>
    <path d="M1130 695.500h4v4h-4z" fill="#e81010"/>
    <g class="rebar">
      <circle cx="671.500" cy="590" r="4.800"/><text class="n" x="671.500" y="593">5</text><text x="680" y="593">2 Ø 20.0, l = 6.000 m</text>
      <circle cx="671.500" cy="625.500" r="4.800"/><text class="n" x="671.500" y="629">3</text><text x="680" y="628">2 Ø 20.0, l = 6.000 m</text>
      <circle cx="694" cy="643" r="4.800"/><text class="n" x="694" y="646">1</text><text x="702" y="646">2 Ø 14.0, l = 15.000 m</text>
      <circle cx="976" cy="607" r="4.800"/><text class="n" x="976" y="610">4</text><text x="984" y="609">2 Ø 20.0, l = 2.000 m</text>
      <circle cx="694" cy="751" r="4.800"/><text class="n" x="694" y="754">1</text><text x="702" y="754">4 Ø 16.0, l = 15.000 m</text>
      <circle cx="798.500" cy="769" r="4.800"/><text class="n" x="798.500" y="772">2</text><text x="807" y="772">2 Ø 12.0, l = 5.000 m</text>
    </g>
    <use href="#axes" x="369" y="700"/><use href="#axes" x="359" y="790"/>
    <g class="val red"><text x="419" y="704">X</text><text x="409" y="794">X</text></g>
    <g class="val navy"><text x="369" y="754">Z</text><text x="359" y="844">Z</text></g>
    <use href="#navcube" x="1087" y="538"/><text class="face" x="1124" y="588">-Y</text>
  </svg>
</section>
</div>
</main>

<div class="toolbar snap" role="toolbar" aria-label="Accrochage et vues">
  <button class="tb" aria-label="Système de coordonnées"><svg><path d="M10 4v9" stroke="#3060c0" stroke-width="1.500"/><path d="M10 13l-8 3" stroke="#18a040" stroke-width="2"/><path d="M10 13l8 2" stroke="#e03010" stroke-width="2"/><path d="M17 12l3 3-4 2z" fill="#e03010"/><path d="M4 13l-4 4 5 0z" fill="#18a040"/><use href="#win" x="9" y="1"/></svg></button>
  <div class="combo cs"><b></b><span>1 - Global XYZ</span><svg class="chev"><path d="M1 1l5 5 5-5" fill="none" stroke="#555"/></svg></div>
  <i class="sep"></i>
  <button class="tb" aria-label="Vue isométrique"><svg><use href="#cube" x="4" y="6"/><use href="#star" x="1" y="1"/><use href="#win" x="10" y="1"/></svg></button>
  <button class="tb" aria-label="Vue X"><svg><path d="M6 7h7v11H6z" fill="#6f93bd"/><path d="M13 7l3-3v11l-3 3z" fill="#46688f"/><path d="M1 8l3-5h14l-2 4M4 5h12" stroke="#1c3ca0" fill="none" stroke-width="1.300"/></svg></button>
  <button class="tb" aria-label="Vue Y"><svg><path d="M2 8h10v8H2z" fill="#6f93bd"/><path d="M2 8l3-3h10l-3 3z" fill="#a9c4e2"/><path d="M12 8l3-3v8l-3 3z" fill="#46688f"/><path d="M18 1v14l-3 3" stroke="#1c3ca0" fill="none" stroke-width="1.500"/></svg></button>
  <button class="tb" aria-label="Vue Z"><svg><use href="#cube" x="5" y="4"/><path d="M3 5v-3h4M3 14v3h4M14 17h3v-3" stroke="#1c3ca0" fill="none" stroke-width="1.500"/></svg></button>
  <button class="tb" aria-label="Vue utilisateur"><svg><use href="#cube" x="5" y="6"/><use href="#win" x="9" y="1"/><path d="M3 3v14h12" stroke="#1c3ca0" fill="none" stroke-dasharray="3 2" stroke-width="1.500"/><use href="#star" x="1" y="0"/></svg></button>
  <i class="sep"></i>
  <button class="tb" aria-label="Niveaux"><svg><path d="M4 9h12v3H4zM2 13h14v4H2z" fill="#b9b9a9" stroke="#444"/><use href="#win" x="9" y="2"/><use href="#star" x="1" y="1"/></svg></button>
  <button class="tb" aria-label="Cotation"><svg><path d="M2 11v7M18 11v7M2 15h16M5 13l-3 2 3 2M15 13l3 2-3 2" stroke="#222" fill="none"/><path d="M10 6l4 5M14 6l-4 5" stroke="#222" stroke-width="1.300"/><use href="#star" x="1" y="1"/></svg></button><button class="dd" aria-label="Cotations"></button>
  <button class="tb" aria-label="Repère"><svg><path d="M3 17l5-4h11M3 13v4h4" stroke="#222" fill="none"/><path d="M9 6l4 5M13 6l-4 5M15 6l4 5M19 6l-4 5" stroke="#222" stroke-width="1.300"/><use href="#star" x="1" y="1"/></svg></button>
  <button class="tb" aria-label="Vérificateur"><svg><path d="M10 7v6l-3 5M10 13l3 5M4 7h12" stroke="#555" stroke-width="2" fill="none"/><circle cx="10" cy="5" r="2" fill="#555"/><use href="#win" x="11" y="1"/><use href="#star" x="0" y="0"/></svg></button>
  <button class="tb" aria-label="Note"><svg><path d="M3 6h14v12H3z" fill="#eee" stroke="#333" stroke-width="1.500"/><use href="#win" x="9" y="1"/><use href="#star" x="1" y="1"/></svg></button>
  <i class="sep"></i>
  <button class="tb" aria-label="Mesurer"><svg><path d="M5 13L13 5" stroke="#111" stroke-width="1.500"/><path d="M3 15l1-5 4 4zM15 3l-5 1 4 4z"/><use href="#dot" x="17" y="6"/><use href="#dot" x="7" y="17"/></svg></button><button class="dd" aria-label="Mesures"></button>
  <button class="tb" aria-label="Renuméroter"><svg><text x="1" y="8" font-size="8" font-weight="700">2</text><text x="12" y="19" font-size="8" font-weight="700">6</text><path d="M1 13h4v5H1z" fill="#5e8cc4"/><path d="M8 3q7 0 7 6M12 7l3 4 3-4" fill="none" stroke="#3f74b4" stroke-width="1.800"/></svg></button><button class="dd" aria-label="Renumérotation"></button>
  <i class="sep"></i>
  <button class="tb" aria-label="Parallèle"><svg><path d="M4 3v14M16 3v14" stroke="#777"/><path d="M10 3v14" stroke="#111"/><use href="#dot" x="10" y="3"/><use href="#dot" x="10" y="17"/></svg></button>
  <button class="tb" aria-label="Pivoter"><svg><path d="M2 3l4 14M18 3l-4 14" stroke="#777"/><path d="M10 3v14" stroke="#111"/><use href="#dot" x="10" y="3"/><use href="#dot" x="10" y="17"/></svg></button>
  <button class="ext" aria-label="Plus">»</button>
  <button class="tb gap" aria-label="Orthogonal"><svg><path d="M4 3v14h14M4 11h6v6" stroke="#666" fill="none" stroke-width="1.300"/></svg></button>
  <button class="tb gap2" aria-label="Grille visible"><svg><use href="#grid" x="2" y="3"/><use href="#eye" x="8" y="1"/></svg></button>
  <button class="tb gap2" aria-label="Nouvelle grille"><svg><use href="#grid" x="2" y="4"/><use href="#win" x="10" y="1"/><use href="#star" x="1" y="1"/></svg></button>
  <button class="tb on" aria-label="Grille d'accrochage"><svg><use href="#grid" x="2" y="4"/><use href="#eye" x="9" y="2"/></svg></button>
  <button class="tb gap3" aria-label="Nouvelle ligne guide"><svg><path d="M3 5h14v12H3z" stroke="#555" fill="none" stroke-dasharray="1.500 1.500"/><use href="#star" x="1" y="1"/></svg></button>
  <button class="tb on" aria-label="Lignes guides"><svg><path d="M5 3v15M2 7h16v11" stroke="#444" fill="none" stroke-dasharray="1.500 1.500"/><use href="#eye" x="9" y="2"/></svg></button>
  <span class="snaps">
  <button class="tb on" aria-label="Accrocher à la grille"><svg><use href="#grid" x="1" y="3"/><path d="M10 12V8q0-5 4-4l4 4" stroke="#99a" stroke-width="3" fill="none"/><path d="M9 11h3v3H9z" fill="#e02010"/><path d="M15 8h3v3h-3z" fill="#1040d0"/></svg></button>
  <button class="tb on" aria-label="Accrocher à l'objet"><svg><path d="M5 15V9q0-5 5-5t5 5v6" stroke="#889" stroke-width="3.500" fill="none"/><path d="M3 12h4v4H3z" fill="#e02010"/><path d="M13 12h4v4h-4z" fill="#1040d0"/></svg></button>
  <button class="tb on" aria-label="Extrémité"><svg><path d="M6 7h8v8H6z"/></svg></button>
  <button class="tb on" aria-label="Intersection"><svg><circle cx="10" cy="11" r="5"/><path d="M5 6l10 10M15 6L5 16"/></svg></button>
  <button class="tb" aria-label="Milieu"><svg><path d="M6 6h9v9H6zM6 6l9 9M15 6l-9 9"/></svg></button>
  <button class="tb" aria-label="Perpendiculaire"><svg><path d="M6 5v10h9M6 9h5v6"/></svg></button>
  <button class="tb" aria-label="Sur la ligne"><svg><path d="M5 16L15 6M9 10l2 2"/></svg></button>
  <button class="tb" aria-label="Parallèle à la ligne"><svg><path d="M5 14l8-8M8 16l8-8"/></svg></button>
  <button class="tb" aria-label="Tangente"><svg><path d="M5 5h10"/><circle cx="10" cy="11" r="4"/></svg></button>
  <button class="tb" aria-label="Centre"><svg><circle cx="10" cy="10" r="5"/><circle cx="10" cy="10" r="2.500"/></svg></button>
  <button class="tb" aria-label="Hachures"><svg><path d="M5 14l9-9M7 16l9-9" stroke-dasharray="2 1"/><path d="M8 8l5 5"/></svg></button>
  <button class="tb" aria-label="Intersection de guides"><svg><path d="M5 14l10-8M6 6l8 8M12 7l4-1" stroke-dasharray="3 1"/></svg></button>
  <button class="tb" aria-label="Points de division"><svg><path d="M5 15L16 6M7 7l7 7" stroke-dasharray="2 1"/></svg></button>
  <button class="tb" aria-label="Points"><svg><path d="M5 15L16 6M6 7l9 8" stroke-dasharray="1 2"/></svg></button>
  <button class="tb on" aria-label="Trame"><svg><path d="M4 5.500h13M4 7.500h13M4 9.500h13M4 11.500h13M4 13.500h13M4 15.500h13" stroke-dasharray="1 1"/></svg></button>
  <button class="tb" aria-label="Cadre"><svg><path d="M4 5h12v11H4z" stroke-dasharray="2 1.500"/></svg></button>
  <button class="tb" aria-label="Calques"><svg><path d="M5 9l3-3h8l-3 3zM5 12h8l3-3M5 15h8l3-3M5 9v6M13 9v6M16 6v6"/></svg></button>
  <button class="tb on" aria-label="Section"><svg><path d="M5 10h10v2H5z" fill="#444"/><path d="M4 8l1 1M15 9l1-1M4 13l1-1M15 12l1 1" stroke="#d01010"/></svg></button>
  </span>
</div>

<footer class="status"><span class="c0"></span><span class="c1"></span><span class="c2">SC : Global XYZ</span><span class="c3">Plan : XZ</span><span class="c4"></span><span class="c4"></span><span class="c4"></span><span class="c5"><svg width="11" height="11"><path d="M8 0h2v2H8zM4 4h2v2H4zM8 4h2v2H8zM0 8h2v2H0zM4 8h2v2H4zM8 8h2v2H8z" fill="#b4b4c0"/></svg></span></footer>
</div>
</body>
</html>
```
FILE: styles.css
```css
* { box-sizing: border-box; }
body {
  margin: 0;
  font: 11px/16px "Noto Sans", "Open Sans", sans-serif;
  color: #000;
  background: #f6f6f7;
}
button { font: inherit; color: inherit; background: none; border: 0; padding: 0; margin: 0; }
h1, h2, ul { margin: 0; padding: 0; font: inherit; }
i, b { font-style: normal; }
svg { display: block; flex: none; }
.defs { position: absolute; width: 0; height: 0; }
.app {
  display: flex;
  flex-direction: column;
  height: 100vh;
  border: solid #1a80d0;
  border-width: 0 2px 2px;
  overflow: hidden;
}

.titlebar {
  flex: none;
  display: flex;
  align-items: center;
  height: 31px;
  padding-left: 6px;
  color: #fff;
  background: #0078d7;
}
.titlebar h1 { flex: 1; margin-left: 4px; }
.titlebar button { display: grid; place-items: center; width: 46px; height: 31px; }

.menubar { flex: none; display: flex; align-items: center; height: 20px; white-space: nowrap; }
.menubar button { padding: 0 8px 0 7px; height: 18px; }
.menubar button + button { padding: 0 8px; }
.menubar .more { margin: 0 5px 0 9px; border: solid transparent; border-width: 4px 0 4px 5px; border-left-color: #999; }
.search {
  width: 231px;
  height: 19px;
  padding: 0 4px;
  border: 0;
  font: inherit;
  background: #e8e8f2;
}
.search::placeholder { color: #85858c; opacity: 1; }
.menubar svg { margin-left: 5px; }
.company { margin-left: auto; padding-right: 8px; }

.toolbar {
  flex: none;
  display: flex;
  align-items: center;
  height: 28px;
  border-top: 1px solid #e4e4e6;
}
.tb { flex: none; display: grid; place-items: center; width: 26px; height: 24px; }
.tb svg { width: 20px; height: 20px; }
.off { filter: grayscale(1) opacity(.7); }
.on { background: #c8e2f8; border: 1px solid #90c8f2; }
.tb.on { width: 24px; margin: 0 1px; }
.dd { flex: none; display: grid; place-items: center; width: 12px; height: 24px; }
.dd::before { content: ""; border: solid transparent; border-width: 5px 4px 0; border-top-color: #222; }
.sep { flex: none; width: 1px; height: 17px; margin: 0 3px; background: #999; }
.edge { flex: none; width: 1px; height: 28px; background: #ddd; }
.grip { flex: none; width: 2px; height: 18px; margin: 0 3px 0 4px; background: repeating-linear-gradient(#aaa 0 2px, transparent 2px 4px); }
.grip:first-child { margin-left: 3px; }
.ext { margin-left: auto; width: 14px; font-size: 14px; color: #444; }
.combo { display: flex; align-items: center; height: 22px; background: #e8e8f2; }
.toolbar > .combo { flex: none; width: 149px; margin: 0 2px 0 1px; }
.elu { width: 30px; height: 13px; margin-left: 5px; font-weight: 400; line-height: 13px; text-align: center; color: #fff; background: #cf6a6a; }
.sp { flex: 1; margin-left: 5px; }
.case { width: 31px; padding-left: 7px; border-left: 1px solid #fff; }
.chev { width: 12px; height: 8px; margin: 0 3px 0 auto; }
.case + .chev { margin-left: 4px; }
.step { flex: none; display: grid; place-items: center; width: 14px; height: 22px; margin-right: 2px; background: #e8e8f2; }
.step svg { width: 5px; height: 8px; }

.work { flex: 1; display: flex; min-height: 0; }
.navigator { flex: none; display: flex; flex-direction: column; width: 286px; }
.navigator header {
  flex: none;
  display: flex;
  align-items: center;
  gap: 11px;
  height: 21px;
  padding: 0 6px 0 5px;
  background: #d7e4f2;
}
.navigator h2 { flex: 1; font-weight: 700; color: #3a3f47; }
.treebox {
  flex: 1;
  display: flex;
  min-height: 0;
  margin: 2px 0 0;
  border: 1px solid #c6c6d2;
  background: #fff;
}
.tree { flex: 1; list-style: none; overflow: hidden; white-space: nowrap; }
.tree li { display: flex; align-items: center; height: 18px; padding-left: 3px; }
.tree .l1 { padding-left: 23px; }
.tree .l2 { padding-left: 43px; }
.tree .l3 { padding-left: 63px; }
.tree .l4 { padding-left: 83px; }
.tree i { flex: none; display: grid; place-items: center; width: 14px; height: 16px; margin-right: 1px; padding-bottom: 3px; }
.tree i::before { width: 6px; height: 6px; border: solid #444; border-width: 0 2px 2px 0; transform: rotate(45deg); }
.tree i.open::before { content: ""; }
.tree i.shut { padding: 0 3px 1px 0; }
.tree i.shut::before { content: ""; border-color: #aaa; transform: rotate(-45deg); }
.tree label { display: flex; align-items: center; }
.tree svg { width: 17px; height: 17px; margin: 0 4px 0 5px; overflow: hidden; }
.tree small { font-size: 9px; }
.tree input {
  appearance: none;
  flex: none;
  display: grid;
  place-items: center;
  width: 13px;
  height: 13px;
  margin: 0 0 2px 4px;
  border: 1px solid #222;
  background: #fff;
}
.tree input:checked::before { content: ""; width: 9px; height: 5px; margin-bottom: 3px; border: solid #222; border-width: 0 0 1px 1px; transform: rotate(-45deg); }
.tree .hot { border-color: #1464b4; background: #c8e2f8; }
.tree .dim { color: #888; }
.tree .dim input { border-color: #ccc; }
.tree .dim svg { filter: grayscale(1); }
.scroll { display: flex; flex-direction: column; align-items: center; width: 15px; background: #f0f0f0; }
.scroll b { width: 100%; height: 206px; background: #cdcdcd; }
.scroll i { display: grid; place-items: center; width: 15px; height: 17px; }
.scroll i::before { content: ""; width: 6px; height: 6px; border: solid #444; border-width: 0 2px 2px 0; transform: rotate(45deg); }
.scroll .up::before { transform: rotate(-135deg); }
.scroll .down { margin-top: auto; }
.tabs { flex: none; display: flex; align-items: flex-start; height: 27px; border: solid #c6c6d2; border-width: 0 0 1px; }
.tabs button { display: grid; place-items: center; width: 39px; height: 23px; border: solid #c6c6d2; border-width: 0 1px 1px; background: #ececee; }
.tabs .sel { height: 25px; background: #fff; border-color: #fff; }

.mdi { flex: 1; display: flex; flex-direction: column; min-width: 0; margin-left: 4px; }
.child {
  flex: 1;
  display: flex;
  flex-direction: column;
  min-height: 0;
  padding: 2px 6px 7px 7px;
  border: 1px solid #44484e;
  border-radius: 6px 6px 0 0;
  background: linear-gradient(#b9cadb, #d7e4f2 24px);
}
.child.active { background: linear-gradient(#98b4d2, #b9d1ea 24px); border-color: #111; box-shadow: inset 0 0 0 1px #8fd6ea; }
.child header { flex: none; display: flex; align-items: center; height: 24px; }
.child h2 { flex: 1; margin-left: 4px; padding-top: 7px; }
.child header > svg { margin: 7px 0 0 1px; }
.child header button {
  display: grid;
  place-items: center;
  width: 32px;
  height: 18px;
  margin-left: 2px;
  border: 1px solid #7d8ba8;
  border-radius: 2px;
  background: linear-gradient(#d8e2ee 50%, #bccbdd 50%);
}
.child.active header button { background: linear-gradient(#bdd0e6 45%, #96afcc 50%, #b4cbe4); border-color: #566b8c; }
.child.active header .close { background: linear-gradient(#e0958b 45%, #b93a22 50%, #cf6a50); border-color: #5c1b12; }
.view { flex: 1; width: 100%; min-height: 0; border-radius: 3px; background: #fff; }
.caption { font-size: 11px; }
.val { font-size: 10px; text-anchor: middle; }
.steel { fill: #5e788c; }
.olive { fill: #7e7e06; }
.green { fill: #04bd04; }
.rose { fill: #f08080; }
.red { fill: #f00; }
.navy { fill: #00008b; }
.face { font-size: 14px; font-weight: 700; fill: #32c832; text-anchor: middle; }
.rebar { font-size: 11px; fill: #e35420; }
.rebar circle { fill: none; stroke: #e35420; }
.rebar .n { font-size: 9px; text-anchor: middle; }

.snap { height: 25px; border-top-color: #f6f6f7; }
.snap .tb { width: 24px; height: 23px; }
.snap .tb svg { width: 20px; height: 20px; }
.snap .tb.on { width: 23px; margin: 0 1px 0 0; }
.snap .combo { width: 128px; margin: 0; }
.snap .cs b { width: 11px; height: 11px; margin: 0 5px; background: #c8ffff; }
.snap .ext { margin: 0 0 0 2px; }
.snap .gap { margin-left: 15px; }
.snap .gap2 { margin-left: 8px; }
.snap .gap3 { margin-left: 6px; }
.snaps { display: flex; margin-left: auto; fill: none; stroke: #555; }
.snaps use { stroke: initial; }
.status { flex: none; display: flex; height: 16px; background: #e8e8f2; }
.status span { padding-left: 4px; border-left: 1px solid #ccc; }
.status .c0 { flex: 1; border: 0; }
.status .c1 { width: 106px; }
.status .c2 { width: 206px; }
.status .c3 { width: 66px; }
.status .c4 { width: 76px; }
.status .c5 { width: 19px; padding: 5px 0 0 7px; }
```
